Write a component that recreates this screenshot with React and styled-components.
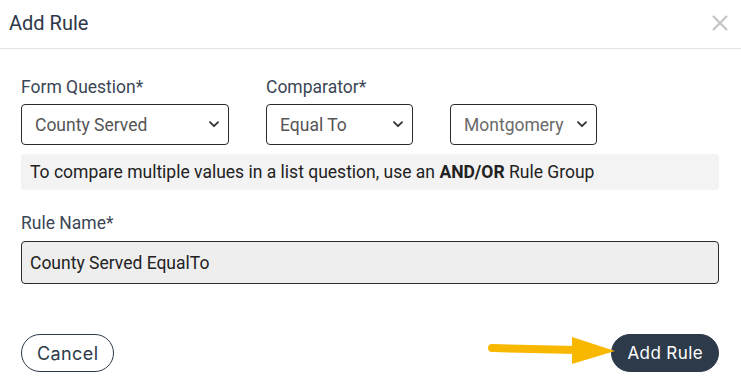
import React from 'react';
import styled, { createGlobalStyle } from 'styled-components';

const GlobalStyle = createGlobalStyle`
  html, body {
    margin: 0;
    padding: 0;
    background: #fff;
    font-family: Roboto, "Liberation Sans", sans-serif;
  }
  * { box-sizing: border-box; }
`;

const Modal = styled.div`
  width: 741px;
  height: 390px;
  background: #fff;
  display: flex;
  flex-direction: column;
`;

const Header = styled.div`
  height: 49px;
  display: flex;
  align-items: center;
  justify-content: space-between;
  padding: 0 12px 2px 9px;
  border-bottom: 1px solid #e4e4e4;
`;

const Title = styled.h2`
  margin: 0;
  font-size: 20px;
  font-weight: 400;
  color: #2d3748;
`;

const CloseButton = styled.button`
  border: none;
  background: none;
  padding: 0;
  width: 18px;
  height: 18px;
  display: flex;
  cursor: pointer;
`;

const Body = styled.div`
  padding: 29px 22px 0 21px;
  display: flex;
  flex-direction: column;
`;

const FieldRow = styled.div`
  display: flex;
  gap: 37px;
  align-items: flex-end;
`;

const Field = styled.div`
  display: flex;
  flex-direction: column;
  width: ${p => p.width}px;
`;

const Label = styled.label`
  font-size: 17.5px;
  color: #3b4655;
  line-height: 19px;
  margin-bottom: ${p => p.gap || 7}px;
`;

const SelectWrap = styled.div`
  position: relative;
  height: 41px;
  border: 1px solid #2b2b2b;
  border-radius: 4px;
  background: #fff;
`;

const Select = styled.select`
  appearance: none;
  width: 100%;
  height: 100%;
  border: none;
  background: transparent;
  font-family: Roboto, "Liberation Sans", sans-serif;
  font-size: 17.5px;
  color: ${p => p.muted ? '#6a6a6a' : '#555'};
  padding: 0 28px 0 13px;
  outline: none;
`;

const Chevron = styled.svg`
  position: absolute;
  right: 9px;
  top: 16px;
  pointer-events: none;
`;

const Notice = styled.div`
  margin-top: 9px;
  height: 36px;
  background: #f3f3f3;
  border-radius: 4px;
  display: flex;
  align-items: center;
  padding: 0 9px;
  font-size: 17.5px;
  color: #222;

  b { font-weight: 700; }
`;

const NameBlock = styled.div`
  margin-top: 24px;
  display: flex;
  flex-direction: column;
`;

const TextInput = styled.input`
  height: 43px;
  border: 1px solid #2b2b2b;
  border-radius: 4px;
  background: #eeeeee;
  font-family: Roboto, "Liberation Sans", sans-serif;
  font-size: 17.5px;
  color: #222;
  padding: 0 8px;
  outline: none;
`;

const Footer = styled.div`
  position: relative;
  margin-top: 50px;
  padding: 0 22px 0 21px;
  display: flex;
  justify-content: space-between;
  align-items: center;
`;

const PillButton = styled.button`
  height: 38px;
  border-radius: 19px;
  font-family: Inter, "Open Sans", sans-serif;
  font-size: ${p => p.primary ? 17 : 18}px;
  letter-spacing: 0.4px;
  padding: 0 15px;
  border: 1px solid #2d3a4a;
  background: ${p => p.primary ? '#2d3a4a' : '#fff'};
  color: ${p => p.primary ? '#fff' : '#2d3a4a'};
  cursor: pointer;
`;

const Arrow = styled.svg`
  position: absolute;
  left: 484px;
  top: 1px;
`;

function Dropdown({ width, value, muted }) {
  return (
    <SelectWrap style={{ width }}>
      <Select muted={muted} defaultValue={value}>
        <option>{value}</option>
      </Select>
      <Chevron width="10" height="7" viewBox="0 0 10 7">
        <path d="M1 1.2 L5 5.2 L9 1.2" fill="none" stroke="#333" strokeWidth="1.8" strokeLinecap="round" strokeLinejoin="round" />
      </Chevron>
    </SelectWrap>
  );
}

export default function App() {
  return (
    <>
      <GlobalStyle />
      <Modal>
        <Header>
          <Title>Add Rule</Title>
          <CloseButton aria-label="Close">
            <svg width="18" height="18" viewBox="0 0 18 18">
              <path d="M2 2 L16 16 M16 2 L2 16" stroke="#c4c4c4" strokeWidth="2.2" />
            </svg>
          </CloseButton>
        </Header>
        <Body>
          <FieldRow>
            <Field width={208}>
              <Label>Form Question*</Label>
              <Dropdown width={208} value="County Served" />
            </Field>
            <Field width={147}>
              <Label>Comparator*</Label>
              <Dropdown width={147} value="Equal To" />
            </Field>
            <Field width={147}>
              <Dropdown width={147} value="Montgomery" muted />
            </Field>
          </FieldRow>
          <Notice>
            <span>To compare multiple values in a list question, use an <b>AND/OR</b> Rule Group</span>
          </Notice>
          <NameBlock>
            <Label gap={8}>Rule Name*</Label>
            <TextInput defaultValue="County Served EqualTo" />
          </NameBlock>
        </Body>
        <Footer>
          <PillButton>Cancel</PillButton>
          <Arrow width="135" height="32" viewBox="0 0 135 32">
            <path d="M8 13 L92 15" stroke="#f9b800" strokeWidth="8" strokeLinecap="round" />
            <polygon points="88,2 131,16 88,29" fill="#f9b800" />
          </Arrow>
          <PillButton primary>Add Rule</PillButton>
        </Footer>
      </Modal>
    </>
  );
}
